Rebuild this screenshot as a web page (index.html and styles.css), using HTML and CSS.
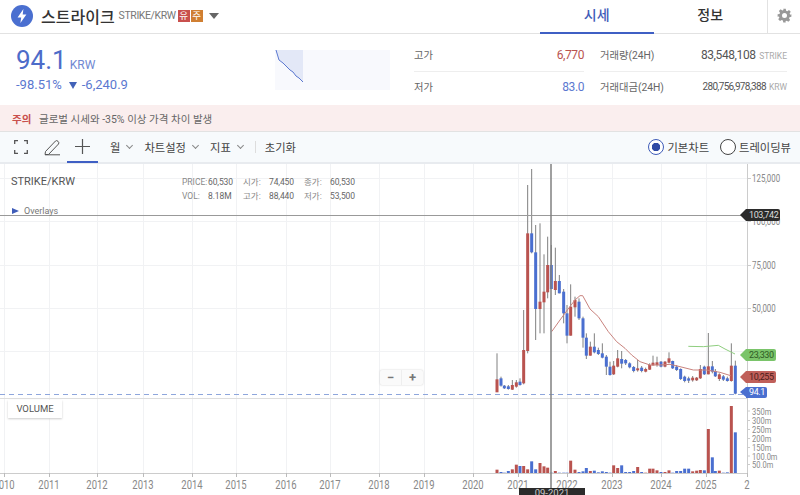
FILE: index.html
```html
<!DOCTYPE html>
<html lang="ko">
<head>
    <meta charset="UTF-8">
    <title>스트라이크 STRIKE/KRW</title>
    <link rel="stylesheet" href="styles.css">
</head>
<body>
    <header class="top-bar">
        <div class="coin-title">
            <svg class="coin-logo" viewBox="0 0 22 22" width="22" height="22">
                <circle cx="11" cy="11" r="11" fill="#4a6fd0"/>
                <path d="M12.4 4 L6.6 12.4 H10.2 L9.4 18 L15.4 9.6 H11.7 Z" fill="#fff"/>
            </svg>
            <span class="coin-name">스트라이크</span>
            <span class="coin-pair">STRIKE/KRW</span>
            <span class="badge badge-red">유</span>
            <span class="badge badge-orange">주</span>
            <span class="caret"></span>
        </div>
        <nav class="tabs">
            <a class="tab active">시세</a>
            <a class="tab">정보</a>
        </nav>
        <div class="settings">
            <svg viewBox="0 0 24 24" width="15" height="15">
                <path fill="#999" fill-rule="evenodd" d="M10 1h4l.6 3.2 1.9.8 2.7-1.8 2.8 2.8-1.8 2.7.8 1.9L23 10v4l-3 .6-.8 1.9 1.8 2.7-2.8 2.8-2.7-1.8-1.9.8L14 23h-4l-.6-3.2-1.9-.8-2.7 1.8-2.8-2.8 1.8-2.7-.8-1.9L1 14v-4l3-.6.8-1.9L3 4.8 5.8 2l2.7 1.8 1.9-.8zM12 8a4 4 0 1 0 0 8 4 4 0 0 0 0-8z"/>
            </svg>
        </div>
    </header>

    <section class="summary">
        <div class="price-box">
            <div class="price-line"><span class="price">94.1</span><span class="price-unit">KRW</span></div>
            <div class="price-change">-98.51%<i class="down-arrow"></i>-6,240.9</div>
        </div>
        <div class="spark">
            <svg viewBox="0 0 115 40" width="115" height="40">
                <path d="M1 0 L4 10 L8 13 L12 17 L15 20 L18 22 L21 26 L24 28 L28 32 V0 Z" fill="#e3e8f7"/>
                <path d="M1 0 L4 10 L8 13 L12 17 L15 20 L18 22 L21 26 L24 28 L28 32" fill="none" stroke="#5b78d0"/>
            </svg>
        </div>
        <div class="stat-col stat-col-left">
            <div class="stat-row"><span class="stat-label">고가</span><span class="stat-up">6,770</span></div>
            <div class="stat-row"><span class="stat-label">저가</span><span class="stat-down">83.0</span></div>
        </div>
        <div class="stat-col stat-col-right">
            <div class="stat-row"><span class="stat-label">거래량(24H)</span><span class="stat-num">83,548,108 <small>STRIKE</small></span></div>
            <div class="stat-row"><span class="stat-label">거래대금(24H)</span><span class="stat-num stat-num-long">280,756,978,388 <small>KRW</small></span></div>
        </div>
    </section>

    <div class="warning"><b>주의</b><span>글로벌 시세와 -35% 이상 가격 차이 발생</span></div>

    <div class="toolbar">
        <button class="tool tool-full">
            <svg viewBox="0 0 14 14" width="14" height="14" fill="none" stroke="#555" stroke-width="1.3">
                <path d="M.7 4V.7H4M10 .7h3.3V4M13.3 10v3.3H10M4 13.3H.7V10"/>
            </svg>
        </button>
        <button class="tool tool-pen">
            <svg viewBox="0 0 17 17" width="17" height="17" fill="none" stroke="#555" stroke-width="1">
                <path d="M1.5 12.5 L11.5 2 Q12.5 1 14 2.3 Q15.5 3.8 14.5 5 L4.5 15.5 H1 Z M1 15.8 H16"/>
            </svg>
        </button>
        <button class="tool tool-active">
            <svg viewBox="0 0 15 15" width="15" height="15" stroke="#555" stroke-width="1.2">
                <path d="M7.5 0V15M0 7.5H15"/>
            </svg>
        </button>
        <a class="menu">월<i class="chev"></i></a>
        <a class="menu">차트설정<i class="chev"></i></a>
        <a class="menu">지표<i class="chev"></i></a>
        <span class="tool-sep"></span>
        <a class="menu">초기화</a>
        <div class="chart-type">
            <label class="radio checked">기본차트</label>
            <label class="radio">트레이딩뷰</label>
        </div>
    </div>

    <main class="chart">
        <svg class="chart-svg" id="chartSvg" viewBox="0 164 800 331" width="800" height="331"></svg>
        <div class="chart-symbol">STRIKE/KRW</div>
        <div class="ohlc">
            <span>PRICE:</span><b>60,530</b><span>시가:</span><b>74,450</b><span>종가:</span><b>60,530</b>
            <span>VOL:</span><b>8.18M</b><span>고가:</span><b>88,440</b><span>저가:</span><b>53,500</b>
        </div>
        <div class="overlays"><i></i>Overlays</div>
        <div class="zoom-btns"><span>−</span><span>+</span></div>
        <div class="volume-btn">VOLUME</div>
        <div class="tag tag-black">103,742</div>
        <div class="tag tag-green">23,330</div>
        <div class="tag tag-red">10,255</div>
        <div class="tag tag-blue">94.1</div>
        <div class="date-tag">09-2021</div>
    </main>
    <script src="chart.js"></script>
</body>
</html>
```

FILE: styles.css
```css
* {
    margin: 0;
    padding: 0;
    box-sizing: border-box;
}

body {
    font-family: Roboto, "Noto Sans CJK KR", sans-serif;
    width: 800px;
    height: 495px;
    overflow: hidden;
    background: #fff;
    color: #555;
    display: flex;
    flex-direction: column;
}

/* Top bar */
.top-bar {
    height: 34px;
    flex-shrink: 0;
    display: flex;
    border-bottom: 1px solid #e2e2e2;
}

.coin-title {
    width: 540px;
    display: flex;
    align-items: center;
    padding: 0 0 2px 11px;
}

.coin-name {
    font-size: 16px;
    font-weight: 500;
    color: #333;
    margin-left: 8px;
}

.coin-pair {
    font-size: 10.5px;
    letter-spacing: -0.4px;
    color: #777;
    margin-left: 4px;
}

.badge {
    width: 12px;
    height: 12px;
    margin-left: 1px;
    font-size: 9.5px;
    line-height: 12px;
    text-align: center;
    color: #fff;
}

.coin-pair + .badge {
    margin-left: 2px;
}

.badge-red {
    background: #c9504d;
}

.badge-orange {
    background: #d07f32;
}

.caret {
    margin-left: 6px;
    border-left: 5.5px solid transparent;
    border-right: 5.5px solid transparent;
    border-top: 6px solid #666;
}

.tabs {
    display: flex;
}

.tab {
    width: 113.5px;
    height: 34px;
    font-size: 14px;
    font-weight: 500;
    line-height: 30px;
    text-align: center;
    color: #333;
}

.tab.active {
    color: #3f5cb8;
    border-bottom: 2px solid #3f5fc4;
}

.settings {
    flex: 1;
    display: flex;
    align-items: center;
    justify-content: center;
    border-left: 1px solid #e2e2e2;
    padding-bottom: 3px;
}

/* Price summary */
.summary {
    height: 71px;
    flex-shrink: 0;
    display: flex;
}

.price-box {
    width: 275px;
    padding: 11px 0 0 16px;
    color: #5b78d0;
}

.price-line {
    height: 30px;
    display: flex;
    align-items: baseline;
}

.price {
    font-size: 26px;
    line-height: 30px;
    color: #4d6cc9;
}

.price-unit {
    font-size: 12px;
    margin-left: 3px;
    color: #7088d2;
}

.price-change {
    display: flex;
    align-items: center;
    font-size: 13px;
    line-height: 20px;
}

.down-arrow {
    margin: 0 5px 0 7px;
    border-left: 4px solid transparent;
    border-right: 4px solid transparent;
    border-top: 7px solid #4262b8;
}

.spark {
    width: 115px;
    height: 40px;
    margin-top: 16px;
    background: #f8f9fd;
}

.spark svg {
    display: block;
}

.stat-col {
    margin-top: 6px;
    height: 60px;
}

.stat-col-left {
    width: 170px;
    margin-left: 24px;
}

.stat-col-right {
    width: 187px;
    margin-left: 16px;
}

.stat-row {
    height: 29px;
    display: flex;
    align-items: center;
    justify-content: space-between;
    font-size: 12px;
    letter-spacing: -0.4px;
}

.stat-row:first-child {
    height: 32px;
    padding-bottom: 2px;
    border-bottom: 1px solid #eee;
}

.stat-label {
    font-size: 10.3px;
    letter-spacing: 0;
    color: #666;
}

.stat-up {
    color: #b9534f;
}

.stat-down {
    color: #5b78d0;
}

.stat-num {
    color: #555;
}

.stat-num-long {
    font-size: 10px;
    letter-spacing: -0.65px;
}

.stat-num small {
    font-size: 8.5px;
    letter-spacing: 0;
    color: #aaa;
    margin-left: 1px;
}

/* Warning */
.warning {
    height: 27px;
    flex-shrink: 0;
    display: flex;
    align-items: center;
    padding-left: 12px;
    background: #faeeee;
    border-bottom: 1px solid #e2e2e2;
    font-size: 10.5px;
    color: #666;
}

.warning b {
    width: 27px;
    font-weight: 700;
    color: #c9504d;
}

/* Toolbar */
.toolbar {
    height: 32px;
    flex-shrink: 0;
    display: flex;
    align-items: center;
    background: #f7fafc;
    border-bottom: 2px solid #e8ebef;
    font-size: 11.3px;
    color: #444;
}

.tool {
    height: 32px;
    display: flex;
    align-items: center;
    justify-content: center;
    background: none;
    border: none;
    flex-shrink: 0;
}

.tool-full {
    width: 42px;
}

.tool-pen {
    width: 20px;
    margin-right: 5px;
}

.tool-active {
    width: 31px;
    border-bottom: 2px solid #3f5fc4;
    padding-top: 1px;
    margin-right: 12px;
}

.menu {
    display: flex;
    align-items: center;
    margin-right: 12px;
}

.chev {
    width: 5px;
    height: 5px;
    margin: -3px 0 0 7px;
    border-right: 1px solid #888;
    border-bottom: 1px solid #888;
    transform: rotate(45deg);
}

.tool-sep {
    width: 1px;
    height: 12px;
    background: #ddd;
    margin-right: 9px;
}

.chart-type {
    margin-left: auto;
    display: flex;
    gap: 11px;
    padding-right: 9px;
}

.radio {
    display: flex;
    align-items: center;
    gap: 3px;
}

.radio::before {
    content: "";
    width: 14px;
    height: 14px;
    border-radius: 50%;
    border: 1px solid #444;
    background: #fff;
}

.radio.checked::before {
    border-color: #3f5cb8;
    background: radial-gradient(circle, #2f4aa5 0 4px, #fff 4.5px);
}

/* Chart */
.chart {
    position: relative;
    flex: 1;
}

.chart-svg {
    position: absolute;
    top: 0;
    left: 0;
    display: block;
}

.chart-svg text {
    font-family: Roboto, sans-serif;
    font-size: 10px;
    fill: #888;
}

.chart-svg .vol-label {
    font-size: 9.5px;
}

.chart-svg .year {
    font-size: 12px;
}

.chart-symbol {
    position: absolute;
    left: 11px;
    top: 11px;
    font-size: 11px;
    color: #555;
}

.ohlc {
    position: absolute;
    left: 182px;
    top: 11px;
    display: grid;
    grid-template-columns: 26px 35px 26px 35px 26px 35px;
    font-size: 8.5px;
    line-height: 14px;
    color: #888;
}

.ohlc span {
    white-space: nowrap;
}

.ohlc b {
    font-weight: 400;
    letter-spacing: -0.1px;
    color: #666;
}

.overlays {
    position: absolute;
    left: 12px;
    top: 42px;
    display: flex;
    align-items: center;
    font-size: 9px;
    color: #777;
}

.overlays i {
    width: 0;
    height: 0;
    margin-right: 5px;
    border-left: 7px solid #3f5cb8;
    border-top: 3.5px solid transparent;
    border-bottom: 3.5px solid transparent;
}

.zoom-btns {
    position: absolute;
    left: 380px;
    top: 206px;
    width: 43px;
    height: 15px;
    display: flex;
    background: #fafafa;
    border-radius: 2px;
    box-shadow: 0 0 2px #ccc;
    font-size: 13px;
    font-weight: 700;
    line-height: 15px;
    text-align: center;
    color: #777;
}

.zoom-btns span {
    flex: 1;
}

.zoom-btns span:first-child {
    border-right: 1px solid #eee;
}

.volume-btn {
    position: absolute;
    left: 8px;
    top: 236px;
    width: 54px;
    height: 18px;
    background: #fff;
    box-shadow: 0 1px 2px #ccc;
    font-size: 9.5px;
    line-height: 18px;
    text-align: center;
    color: #555;
}

.tag {
    position: absolute;
    left: 746px;
    height: 12px;
    padding-left: 3px;
    border-radius: 0 2px 2px 0;
    font-size: 9px;
    letter-spacing: -0.4px;
    line-height: 12px;
}

.tag::before {
    content: "";
    position: absolute;
    left: -6px;
    top: 0;
    border-right: 6px solid;
    border-top: 6px solid transparent;
    border-bottom: 6px solid transparent;
}

.tag-black {
    top: 45px;
    width: 34px;
    background: #2b2b2b;
    color: #ddd;
}

.tag-black::before {
    border-right-color: #2b2b2b;
}

.tag-green {
    top: 185px;
    width: 30px;
    background: #7ac46a;
    color: #2f5a25;
}

.tag-green::before {
    border-right-color: #7ac46a;
}

.tag-red {
    top: 207px;
    width: 30px;
    background: #c0605a;
    color: #4d1d1a;
}

.tag-red::before {
    border-right-color: #c0605a;
}

.tag-blue {
    top: 223px;
    width: 21px;
    height: 11px;
    line-height: 11px;
    background: #4a6fd0;
    color: #fff;
}

.tag-blue::before {
    border-right-color: #4a6fd0;
    border-top-width: 5.5px;
    border-bottom-width: 5.5px;
}

.date-tag {
    position: absolute;
    left: 519px;
    top: 324px;
    width: 66px;
    height: 7px;
    background: #2b2b2b;
    color: #ccc;
    font-size: 9.5px;
    line-height: 9px;
    text-align: center;
    overflow: hidden;
}
```

FILE: chart.js
```js
const svg = document.getElementById('chartSvg');
const RED = '#b9534f';
const BLUE = '#4a6fd0';
const WICK = '#808080';
const TEXT_SQUEEZE = 0.79; // axis labels are narrower than plain Roboto

// x, wick top, wick bottom, body top, body bottom, colour (r/b), volume top
// measured in 3x crop units, origin at 480,165 (volume top is origin 480,340)
const candles = [
    [51, 565, 680, 643, 682, 'r', 389], [63, 635, 665, 640, 662, 'b', 396],
    [73, 660, 672, 662, 670, 'b', 398], [85, 660, 674, 664, 672, 'b', 393],
    [97, 645, 675, 660, 674, 'r', 388], [109, 645, 668, 652, 665, 'r', 374],
    [120, 640, 662, 650, 660, 'b', 378], [131, 435, 658, 555, 655, 'r', 378],
    [143, 60, 565, 205, 558, 'r', 388], [155, 12, 265, 205, 262, 'b', 364],
    [167, 180, 525, 262, 432, 'b', 388], [180, 175, 505, 410, 432, 'r', 369],
    [192, 268, 505, 380, 412, 'r', 379], [203, 215, 400, 300, 382, 'r', 383],
    [214, 240, 372, 300, 372, 'b', 398], [226, 248, 390, 348, 375, 'r', 393],
    [238, 330, 385, 348, 385, 'b', 398], [251, 372, 475, 380, 445, 'b', 398],
    [261, 420, 535, 445, 512, 'b', 398], [272, 358, 512, 425, 512, 'r', 362],
    [285, 395, 455, 405, 427, 'r', 389], [297, 400, 465, 410, 460, 'b', 396],
    [309, 455, 548, 460, 518, 'b', 394], [319, 505, 582, 518, 572, 'b', 384],
    [331, 530, 572, 545, 572, 'r', 393], [343, 505, 565, 545, 562, 'b', 392],
    [355, 548, 570, 555, 567, 'b', 397], [367, 535, 580, 565, 578, 'b', 394],
    [379, 570, 630, 575, 605, 'b', 396], [390, 590, 632, 605, 630, 'b', 398],
    [401, 588, 630, 602, 628, 'r', 376], [413, 555, 607, 580, 605, 'r', 384],
    [425, 558, 610, 582, 596, 'b', 376], [437, 582, 600, 585, 595, 'b', 396],
    [449, 592, 610, 595, 607, 'b', 396], [461, 603, 622, 606, 618, 'b', 393],
    [473, 585, 620, 610, 616, 'r', 381], [485, 603, 622, 608, 618, 'b', 396],
    [497, 608, 622, 612, 620, 'r', 398], [509, 595, 615, 600, 614, 'r', 386],
    [519, 572, 602, 593, 601, 'r', 386], [531, 575, 605, 592, 600, 'r', 391],
    [543, 588, 607, 590, 605, 'b', 396], [555, 588, 607, 590, 605, 'r', 396],
    [567, 562, 595, 580, 593, 'r', 391], [578, 587, 612, 588, 610, 'b', 398],
    [590, 600, 618, 605, 615, 'b', 393], [602, 610, 645, 612, 642, 'b', 393],
    [614, 632, 652, 635, 648, 'b', 386], [626, 635, 654, 640, 647, 'b', 386],
    [638, 633, 650, 638, 646, 'r', 394], [650, 636, 648, 638, 646, 'r', 392],
    [661, 600, 642, 612, 640, 'r', 390], [673, 602, 630, 605, 628, 'b', 391],
    [685, 504, 628, 604, 628, 'r', 267], [697, 588, 625, 604, 620, 'b', 352],
    [706, 612, 636, 618, 634, 'b', 393], [718, 625, 648, 628, 642, 'r', 392],
    [730, 630, 648, 634, 644, 'b', 398], [742, 635, 650, 640, 648, 'b', 397],
    [754, 535, 650, 602, 648, 'r', 198], [766, 587, 688, 602, 686, 'b', 277]
];

const maLine = [[215, 500], [240, 465], [262, 435], [285, 405], [300, 392], [308, 392], [330, 432], [355, 455], [385, 500], [410, 530], [435, 550], [455, 570], [480, 590], [510, 600], [540, 600], [570, 598], [600, 605], [640, 615], [680, 615], [720, 622], [752, 632]];
const greenLine = [[625, 544], [670, 545], [715, 541], [735, 552], [765, 567]];

const years = [[4, '2010'], [49, '2011'], [97, '2012'], [143, '2013'], [192, '2014'], [236, '2015'], [286, '2016'], [330, '2017'], [379, '2018'], [424, '2019'], [473, '2020'], [518, '2021'], [567, '2022'], [612, '2023'], [661, '2024'], [706, '2025'], [747, '2']];
const priceTicks = [[178, '125,000'], [221, '100,000'], [265, '75,000'], [308, '50,000']];
const volTicks = [[411, '350m'], [420.5, '300m'], [429.5, '250m'], [438.5, '200m'], [447.5, '150m'], [456, '100.0m'], [464.5, '50.0m']];

function add(tag, attrs, text) {
    const el = document.createElementNS('http://www.w3.org/2000/svg', tag);
    for (const key in attrs) {
        el.setAttribute(key, attrs[key]);
    }
    if (text) el.textContent = text;
    svg.appendChild(el);
    return el;
}

function line(x1, y1, x2, y2, stroke, extra) {
    add('line', { x1, y1, x2, y2, stroke, ...extra });
}

function label(attrs, text) {
    const el = add('text', attrs, text);
    el.setAttribute('textLength', el.getComputedTextLength() * TEXT_SQUEEZE);
    el.setAttribute('lengthAdjust', 'spacingAndGlyphs');
}

const toX = (z) => 480 + z / 3;
const toY = (z) => 165 + z / 3;
const toPoints = (pts) => pts.map((p) => `${toX(p[0])},${toY(p[1])}`).join(' ');

// Grid
years.slice(0, -1).forEach(([x]) => line(x + 0.5, 164, x + 0.5, 473, '#f1f2f4'));
[178, 221, 265, 308, 351].forEach((y) => line(0, y + 0.5, 747, y + 0.5, '#f1f2f4'));

// Candles
candles.forEach(([x, wt, wb, bt, bb, c, vt]) => {
    const fill = c === 'r' ? RED : BLUE;
    const px = toX(x);
    line(px, toY(wt), px, toY(wb), WICK);
    add('rect', { x: px - 1.5, y: toY(bt), width: 3, height: toY(bb) - toY(bt), fill });
    const vy = 340 + vt / 3;
    add('rect', { x: px - 1.5, y: vy, width: 3, height: 473 - vy, fill });
});

add('polyline', { points: toPoints(maLine), fill: 'none', stroke: '#c9837e' });
add('polyline', { points: toPoints(greenLine), fill: 'none', stroke: '#8fce7f' });

// Axes and guide lines
line(0, 215.5, 747, 215.5, '#999');
line(0, 394.5, 747, 394.5, '#8ea6dc', { 'stroke-dasharray': '5 4' });
line(0, 398.5, 747, 398.5, '#ddd');
line(0, 473.5, 747, 473.5, '#ccc');
line(747.5, 164, 747.5, 474, '#ccc');
line(551, 164, 551, 488, '#808080', { 'stroke-width': 1.5 });

years.forEach(([x, text]) => {
    line(x + 0.5, 473, x + 0.5, 477, '#bbb');
    label({ x, y: 489, 'text-anchor': 'middle', class: 'year' }, text);
});
priceTicks.forEach(([y, text]) => {
    line(747, y + 0.5, 751, y + 0.5, '#ccc');
    label({ x: 752, y: y + 4 }, text);
});
volTicks.forEach(([y, text]) => {
    line(747, y, 750, y, '#ccc');
    label({ x: 752, y: y + 3.5, class: 'vol-label' }, text);
});
```
